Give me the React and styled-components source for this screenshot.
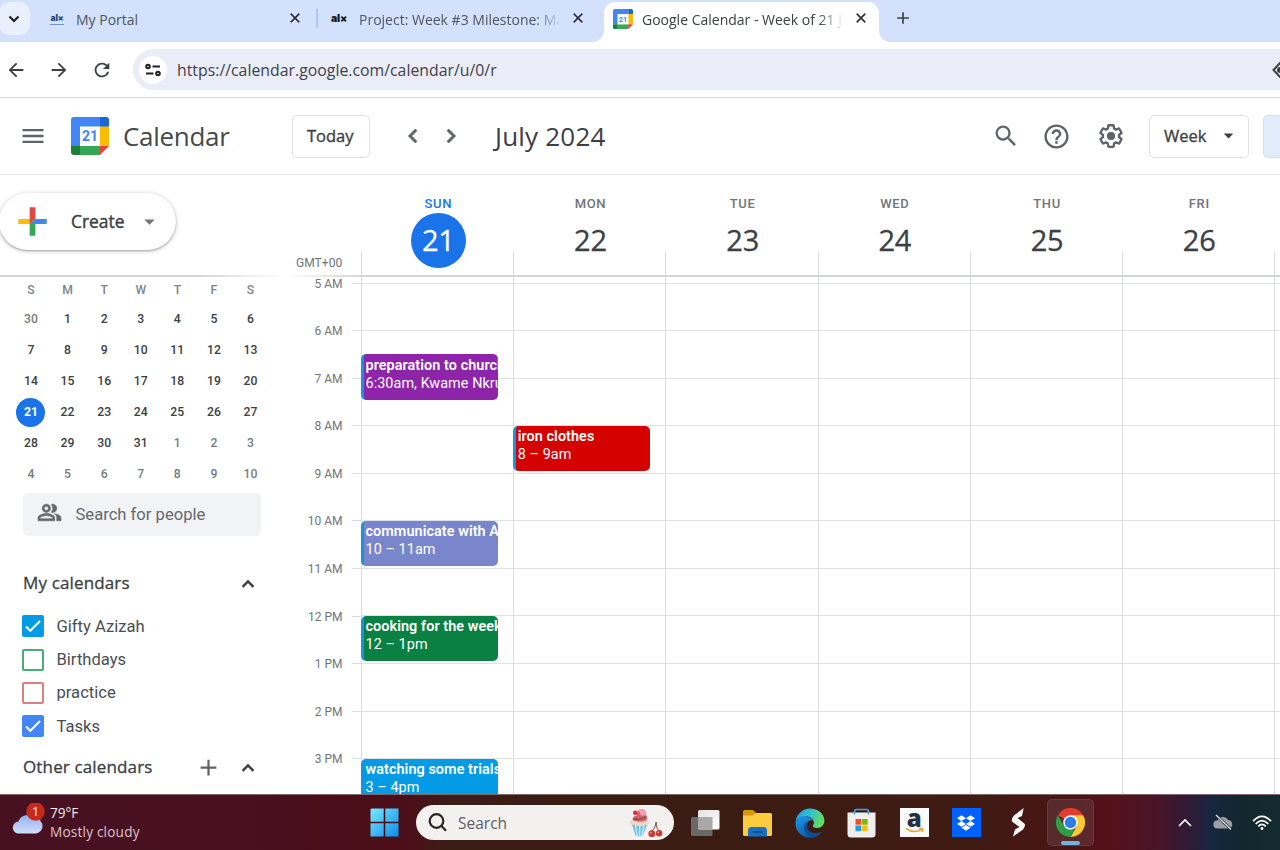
import React from "react";
import styled, { createGlobalStyle, css } from "styled-components";
import {
  MdSearch,
  MdMenu,
  MdChevronLeft,
  MdChevronRight,
  MdHelpOutline,
  MdArrowDropDown,
  MdOutlinePeopleAlt,
  MdExpandLess,
  MdAdd,
  MdRefresh,
  MdArrowBack,
  MdArrowForward,
  MdClose,
} from "react-icons/md";
import { FaDropbox } from "react-icons/fa";

const GlobalStyle = createGlobalStyle`
  * {
    box-sizing: border-box;
  }
  body {
    margin: 0;
    overflow: hidden;
    background: #fff;
    font-family: Roboto, "Liberation Sans", sans-serif;
    color: #3c4043;
  }
  svg {
    display: block;
    flex-shrink: 0;
  }
`;

const systemFont = css`
  font-family: "Open Sans", "Noto Sans", sans-serif;
`;

/* heavier strokes, without outlining the icon's empty bounding path */
const boldIcon = css`
  path:not([fill="none"]) {
    stroke: currentColor;
    stroke-width: 0.6px;
  }
`;

const Screen = styled.div`
  width: 1280px;
  height: 850px;
  overflow: hidden;
  display: flex;
  flex-direction: column;
`;

/* browser */
const TabStrip = styled.div`
  height: 42px;
  flex-shrink: 0;
  display: flex;
  background: #d3e1fc;
`;
const TabSearch = styled.div`
  width: 31px;
  height: 33px;
  margin: 2px 0 0 -1px;
  padding-left: 6px;
  display: flex;
  align-items: center;
  border-radius: 11px;
  background: #e9f0fd;
  color: #1f2023;
`;
const Tab = styled.div`
  position: relative;
  width: ${(props) => props.$width}px;
  height: 40px;
  margin-top: 2px;
  padding: 0 ${(props) => props.$end}px 7px ${(props) => props.$pad}px;
  display: flex;
  align-items: center;
  color: ${(props) => (props.$active ? "#3c4043" : "#50545c")};
  ${(props) =>
    props.$active &&
    css`
      background: #fff;
      border-radius: 11px 11px 0 0;
      &::before,
      &::after {
        content: "";
        position: absolute;
        bottom: 0;
        width: 11px;
        height: 11px;
      }
      &::before {
        left: -11px;
        background: radial-gradient(circle at 0 0, transparent 10.5px, #fff 11px);
      }
      &::after {
        right: -11px;
        background: radial-gradient(circle at 100% 0, transparent 10.5px, #fff 11px);
      }
    `}
`;
const AlxMark = styled.span`
  width: ${(props) => (props.$underline ? 14 : 18)}px;
  font: 900 ${(props) => (props.$underline ? 8.5 : 10.5)}px/9px Inter, sans-serif;
  letter-spacing: -0.2px;
  text-align: center;
  white-space: nowrap;
  color: ${(props) => props.$color};
  border-bottom: ${(props) => (props.$underline ? "1px solid #6c95cb" : "0")};
  padding-bottom: 1px;
  margin: 1px ${(props) => props.$gap}px 0 0;
`;
const TabTitle = styled.span`
  ${systemFont}
  flex: 1;
  overflow: hidden;
  white-space: nowrap;
  font-size: 14px;
  line-height: 22px;
  margin: 3px 0 0 ${(props) => props.$gap || 0}px;
  ${(props) =>
    props.$fade &&
    css`
      mask-image: linear-gradient(to right, #000 calc(100% - 24px), transparent calc(100% + 2px));
    `}
`;
const TabClose = styled.span`
  display: flex;
  margin: -1px 0 0 ${(props) => props.$gap || 0}px;
  color: #2b2c30;
  ${boldIcon}
`;
const TabDivider = styled.span`
  width: 2px;
  height: 19px;
  margin: 9px 0 0 -1px;
  background: #a8c7fa;
`;
const NewTab = styled.span`
  display: flex;
  padding: 8px 0 0 14px;
  color: #3c4043;
`;
const AddressRow = styled.div`
  height: 56px;
  flex-shrink: 0;
  display: flex;
  align-items: center;
  border-bottom: 1px solid #d8dadd;
  background: #fff;
`;
const NavButtons = styled.div`
  width: 133px;
  padding-left: 5px;
  display: flex;
  gap: 21px;
  color: #3c4043;
`;
const Omnibox = styled.div`
  ${systemFont}
  flex: 1;
  height: 41px;
  padding: 0 0 0 6px;
  display: flex;
  align-items: center;
  overflow: hidden;
  border-radius: 21px 0 0 21px;
  background: #eaedf7;
  font-size: 15.8px;
  color: #3f4146;
`;
const SiteInfo = styled.span`
  width: 28px;
  height: 28px;
  margin-right: 10px;
  display: flex;
  align-items: center;
  justify-content: center;
  border-radius: 50%;
  background: #fff;
`;
const Url = styled.span`
  flex: 1;
  letter-spacing: 0.02px;
`;
const ExtensionMark = styled.span`
  width: 8px;
  overflow: hidden;
`;

/* calendar header */
const Header = styled.header`
  height: 77px;
  flex-shrink: 0;
  display: flex;
  align-items: center;
  padding-left: 19px;
  border-bottom: 1px solid #e4e6e8;
  color: #5f6368;
`;
const Brand = styled.h1`
  width: 169px;
  margin: 0 0 0 14px;
  font: 400 26px/32px "Open Sans", sans-serif;
  letter-spacing: -0.3px;
  color: #45494d;
`;
const OutlineButton = styled.div`
  ${systemFont}
  width: ${(props) => props.$width}px;
  height: 43px;
  padding: 0 8px 2px 14px;
  display: flex;
  align-items: center;
  justify-content: space-between;
  border: 1px solid #dfe1e5;
  border-radius: 5px;
  font-size: 16.5px;
  -webkit-text-stroke: 0.35px;
  color: #3c4043;
`;
const Arrows = styled.div`
  display: flex;
  gap: 10px;
  margin: 0 30px 0 29px;
  ${boldIcon}
`;
const MonthTitle = styled.h2`
  flex: 1;
  margin: 0;
  font: 400 26px/32px "Open Sans", sans-serif;
  letter-spacing: 0.2px;
  color: #3c4043;
`;
const HeaderIcons = styled.div`
  display: flex;
  align-items: center;
  margin-right: 24px;
`;
const HelpSlot = styled.span`
  margin: 0 26px 0 22px;
`;
const GridButton = styled.div`
  width: 17px;
  height: 43px;
  margin-left: 14px;
  border: 1px solid #d3dfec;
  border-right: 0;
  border-radius: 5px 0 0 5px;
  background: #e1edfb;
`;

/* sidebar */
const Main = styled.div`
  height: 619px;
  flex-shrink: 0;
  display: flex;
  overflow: hidden;
`;
const Sidebar = styled.aside`
  width: 285px;
  flex-shrink: 0;
`;
const CreateArea = styled.div`
  height: 101px;
  padding-top: 18px;
`;
const CreateButton = styled.div`
  width: 177px;
  height: 57px;
  margin-left: -1px;
  padding-left: 13px;
  display: flex;
  align-items: center;
  border-radius: 29px;
  box-shadow: 0 1px 2px rgba(60, 64, 67, 0.38), 0 1px 4px 1px rgba(60, 64, 67, 0.16);
  font: 400 17.4px "Open Sans", sans-serif;
  -webkit-text-stroke: 0.4px;
  color: #3c4043;
`;
const CreateText = styled.span`
  width: 66px;
  margin: -1px 0 0 18px;
`;
const SidebarRule = styled.div`
  height: 2px;
  margin-top: -1px;
  background: linear-gradient(to right, #d3d5d7 70%, transparent);
`;
const MiniCalendar = styled.div`
  padding-left: 12.7px;
  display: grid;
  grid-template-columns: repeat(7, 36.6px);
  grid-template-rows: 27.3px repeat(6, 30.9px);
  place-items: center;
  font-size: 12.2px;
  font-weight: 500;
`;
const WeekLetter = styled.span`
  padding-bottom: 2px;
  color: #80848a;
`;
const MiniDay = styled.span`
  width: 29px;
  height: 29px;
  border-radius: 50%;
  line-height: 29px;
  text-align: center;
  letter-spacing: 0.1px;
  color: ${(props) => (props.$muted ? "#777b80" : "#3c4043")};
  ${(props) =>
    props.$today &&
    css`
      background: #1a73e8;
      color: #fff;
      font-weight: 700;
    `}
`;
const PeopleSearch = styled.div`
  width: 238px;
  height: 43px;
  margin: 3px 0 28px 23px;
  padding: 0 0 0 14px;
  display: flex;
  align-items: center;
  gap: 13.5px;
  border-radius: 5px;
  background: #f1f3f4;
  font-size: 16.6px;
  color: #64686d;
`;
const PeopleIcon = styled(MdOutlinePeopleAlt)`
  margin-top: -4px;
  ${boldIcon}
`;
const SectionTitle = styled.div`
  height: 40px;
  margin: ${(props) => props.$top || 0}px 0 6px;
  padding: 0 25px 0 23px;
  display: flex;
  align-items: center;
  font: 400 17px "Open Sans", sans-serif;
  color: #3c4043;
`;
const SectionName = styled.span`
  flex: 1;
  margin-top: -2px;
  letter-spacing: 0.14px;
  -webkit-text-stroke: 0.3px;
`;
const SectionIcons = styled.span`
  display: flex;
  align-items: center;
  gap: 14px;
`;
const Collapse = styled(MdExpandLess)`
  ${boldIcon}
`;
const CalendarRow = styled.div`
  height: 33.3px;
  padding-left: 22px;
  display: flex;
  align-items: center;
  gap: 12.5px;
  font-size: 16.6px;
  color: #4a4e52;
`;
const Checkbox = styled.span`
  width: 22px;
  height: 22px;
  border: 2px solid ${(props) => props.$color};
  border-radius: 2px;
  background: ${(props) => (props.$checked ? props.$color : "#fff")};
  display: flex;
  align-items: center;
  justify-content: center;
`;

/* week view */
const Week = styled.section`
  width: 995px;
  overflow: hidden;
`;
const WeekHead = styled.div`
  height: 102px;
  display: flex;
  background: linear-gradient(to right, transparent, #d2d4d7 80px) bottom / 100% 2px no-repeat;
`;
const Zone = styled.div`
  width: 76px;
  flex-shrink: 0;
  padding: 80px 0 0 11px;
  font-size: 12.1px;
  line-height: 16px;
  color: #70757a;
`;
const DayHead = styled.div`
  width: 152.2px;
  flex-shrink: 0;
  margin-bottom: 2px;
  padding: 20px 0 0 2.4px;
  display: flex;
  flex-direction: column;
  align-items: center;
  background: linear-gradient(#dadce0, #dadce0) left bottom / 1px 24px no-repeat;
  color: ${(props) => (props.$today ? "#1a73e8" : "#70757a")};
`;
const DayName = styled.span`
  font-size: 13px;
  line-height: 18px;
  font-weight: 500;
  letter-spacing: 0.7px;
`;
const DayNumber = styled.span`
  width: 55px;
  height: 55px;
  border-radius: 50%;
  font: 400 29px/54px "Open Sans", sans-serif;
  text-align: center;
  letter-spacing: -0.2px;
  -webkit-text-stroke: 0.3px;
  color: ${(props) => (props.$today ? "#fff" : "#3c4043")};
  background: ${(props) => (props.$today ? "#1a73e8" : "transparent")};
`;
const Grid = styled.div`
  display: flex;
`;
const Gutter = styled.div`
  width: 76px;
  flex-shrink: 0;
  margin-top: -0.45px;
`;
const HourLabel = styled.div`
  height: 47.57px;
  display: flex;
  justify-content: flex-end;
  gap: 9.5px;
  font-size: 12px;
  line-height: 14px;
  color: #70757a;
  &::after {
    content: "";
    width: 9px;
    height: 1px;
    margin-top: 6px;
    background: #dadce0;
  }
`;
const DayColumn = styled.div`
  position: relative;
  width: 152.2px;
  flex-shrink: 0;
  padding-top: 5.55px;
  border-left: 1px solid #dadce0;
`;
const HourCell = styled.div`
  height: 47.57px;
  border-top: 1px solid #dfe1e4;
`;
const EventCard = styled.div`
  position: absolute;
  top: ${(props) => 6 + (props.$start - 5) * 47.57}px;
  left: -1px;
  width: 137px;
  height: 45.5px;
  padding: 2.5px 0 0 1.5px;
  overflow: hidden;
  border-left: 3px solid #1795dc;
  border-radius: 5px;
  background: ${(props) => props.$color};
  color: #fff;
  font-size: 14.4px;
  line-height: 18px;
  letter-spacing: 0.07px;
  white-space: nowrap;
`;
const EventTitle = styled.div`
  font-weight: 600;
`;

/* taskbar */
const Taskbar = styled.footer`
  position: relative;
  height: 56px;
  flex-shrink: 0;
  display: flex;
  align-items: center;
  border-top: 1px solid #80686a;
  background: linear-gradient(
    to right,
    #481122 0,
    #481020 250px,
    #4b0d18 350px,
    #4c0f19 410px,
    #3a1d14 450px,
    #3a1c12 700px,
    #401b14 970px,
    #4a1416 1080px,
    #551119 1110px,
    #48152a 1160px,
    #2a1c38 1195px,
    #152740 1212px,
    #12272d 1240px,
    #142c30 1280px
  );
  ${systemFont}
`;
const Weather = styled.div`
  width: 358px;
  padding-left: 10px;
  display: flex;
  align-items: flex-start;
  gap: 4px;
  font-size: 13.6px;
  line-height: 19px;
  color: #f3e9ec;
`;
const WeatherDetail = styled.div`
  letter-spacing: 0.2px;
  color: #dcc5cb;
`;
const StartSlot = styled.div`
  width: 58px;
  padding-left: 12px;
`;
const TaskSearch = styled.div`
  width: 258px;
  height: 35px;
  padding: 0 11px 0 11px;
  display: flex;
  align-items: center;
  gap: 10px;
  border-radius: 18px;
  background: #f3f1f0;
  font-size: 15.5px;
  color: #605e5e;
`;
const TaskSearchText = styled.span`
  flex: 1;
`;
const Apps = styled.div`
  width: 418px;
  margin-left: 5px;
  display: flex;
`;
const AppSlot = styled.div`
  width: 52.25px;
  height: 47px;
  flex-shrink: 0;
  display: flex;
  align-items: center;
  justify-content: center;
`;
const AppTile = styled.div`
  position: relative;
  width: 29px;
  height: 29px;
  display: flex;
  align-items: center;
  justify-content: center;
  background: ${(props) => props.$color};
  color: #fff;
`;
const AmazonLetter = styled.span`
  font: 800 24px/16px "Open Sans", sans-serif;
  color: #25303e;
  margin-top: -9px;
`;
const AmazonSmile = styled.svg`
  position: absolute;
  left: 5px;
  bottom: 3px;
`;
const ActiveApp = styled.div`
  position: relative;
  width: 47px;
  height: 47px;
  display: flex;
  align-items: center;
  justify-content: center;
  border: 1px solid rgba(255, 255, 255, 0.09);
  border-radius: 5px;
  background: rgba(255, 255, 255, 0.09);
  &::after {
    content: "";
    position: absolute;
    left: 13px;
    bottom: 0;
    width: 19px;
    height: 4px;
    border-radius: 2px;
    background: #6cb4e4;
  }
`;
const Tray = styled.div`
  padding-left: 80px;
  display: flex;
  align-items: center;
  gap: 19.5px;
`;

const hours = [
  "5 AM", "6 AM", "7 AM", "8 AM", "9 AM", "10 AM",
  "11 AM", "12 PM", "1 PM", "2 PM", "3 PM",
];

const days = [
  {
    name: "SUN",
    number: 21,
    today: true,
    events: [
      { title: "preparation to church", time: "6:30am, Kwame Nkrumah", start: 6.5, color: "#8e24aa" },
      { title: "communicate with ALX", time: "10 – 11am", start: 10, color: "#7986cb" },
      { title: "cooking for the week", time: "12 – 1pm", start: 12, color: "#0b8043" },
      { title: "watching some trials", time: "3 – 4pm", start: 15, color: "#039be5" },
    ],
  },
  {
    name: "MON",
    number: 22,
    events: [{ title: "iron clothes", time: "8 – 9am", start: 8, color: "#d50000" }],
  },
  { name: "TUE", number: 23, events: [] },
  { name: "WED", number: 24, events: [] },
  { name: "THU", number: 25, events: [] },
  { name: "FRI", number: 26, events: [] },
  { name: "", number: "", events: [] },
];

const miniDays = [
  30, ...Array.from({ length: 31 }, (_, i) => i + 1),
  ...Array.from({ length: 10 }, (_, i) => i + 1),
];

const calendars = [
  { name: "Gifty Azizah", color: "#039be5", checked: true },
  { name: "Birthdays", color: "#4aaa78" },
  { name: "practice", color: "#db817b" },
  { name: "Tasks", color: "#4285f4", checked: true },
];

function CalendarLogo({ size }) {
  return (
    <svg width={size} height={size} viewBox="0 0 38 38">
      <path d="M3 0h26v10H9v19H0V3a3 3 0 0 1 3-3z" fill="#4285f4" />
      <path d="M29 0h6a3 3 0 0 1 3 3v7h-9z" fill="#1967d2" />
      <path d="M29 9.500h9V29h-9z" fill="#fbbc04" />
      <path d="M9 29h20v9H9z" fill="#34a853" />
      <path d="M0 29h9v9H3a3 3 0 0 1-3-3z" fill="#188038" />
      <path d="M29 29h9l-9 9z" fill="#ea4335" />
      <path d="M9 9.500h20V29H9z" fill="#fff" />
      <text
        x="19"
        y="24.300"
        textAnchor="middle"
        fontFamily="Roboto, sans-serif"
        fontWeight="700"
        fontSize="14"
        fill="#4285f4"
      >
        21
      </text>
    </svg>
  );
}

function Gear() {
  return (
    <svg width="28" height="28" viewBox="0 0 24 24" fill="currentColor">
      <path d="M13.85 22.25h-3.7c-.74 0-1.36-.54-1.45-1.27l-.27-1.89c-.27-.14-.53-.29-.79-.46l-1.8.72c-.7.26-1.47-.03-1.81-.65L2.2 15.53c-.35-.66-.2-1.44.36-1.88l1.53-1.19c-.01-.15-.02-.3-.02-.46 0-.15.01-.31.02-.46l-1.52-1.19c-.59-.45-.74-1.26-.37-1.88l1.85-3.19c.34-.62 1.11-.9 1.79-.63l1.81.73c.26-.17.52-.32.78-.46l.27-1.91c.09-.7.71-1.25 1.44-1.25h3.7c.74 0 1.36.54 1.45 1.27l.27 1.89c.27.14.53.29.79.46l1.8-.72c.71-.26 1.48.03 1.82.65l1.84 3.18c.36.66.2 1.44-.36 1.88l-1.52 1.19c.01.15.02.3.02.46s-.01.31-.02.46l1.52 1.19c.56.45.72 1.23.37 1.86l-1.86 3.22c-.34.62-1.11.9-1.8.63l-1.8-.72c-.26.17-.52.32-.78.46l-.27 1.91c-.1.68-.72 1.22-1.46 1.22zm-3.23-2h2.76l.37-2.55.53-.22c.44-.18.88-.44 1.34-.78l.45-.34 2.38.96 1.38-2.4-2.03-1.58.07-.56c.03-.26.06-.51.06-.78s-.03-.53-.06-.78l-.07-.56 2.03-1.58-1.39-2.4-2.39.96-.45-.35c-.42-.32-.87-.58-1.33-.77l-.52-.22-.37-2.55h-2.76l-.37 2.55-.53.21c-.44.19-.88.44-1.34.79l-.45.33-2.38-.95-1.39 2.39 2.03 1.58-.07.56a7 7 0 0 0-.06.79c0 .26.02.53.06.78l.07.56-2.03 1.58 1.38 2.4 2.39-.96.45.35c.43.33.86.58 1.33.77l.53.22.38 2.55z" />
      <circle cx="12" cy="12" r="3.5" />
    </svg>
  );
}

function BrowserBar() {
  return (
    <>
      <TabStrip>
        <TabSearch>
          <svg width="18" height="18" viewBox="0 0 18 18" fill="none" stroke="currentColor" strokeWidth="2.2">
            <path d="M4.500 6.500 9 11l4.500-4.500" />
          </svg>
        </TabSearch>
        <Tab $width={287} $pad={20} $end={14.5}>
          <AlxMark $color="#27477f" $underline $gap={12}>al×</AlxMark>
          <TabTitle>My Portal</TabTitle>
          <TabClose><MdClose size={16} /></TabClose>
        </Tab>
        <TabDivider />
        <Tab $width={286} $pad={12} $end={18}>
          <AlxMark $color="#15171b" $gap={11}>al×</AlxMark>
          <TabTitle $fade>Project: Week #3 Milestone: Mastering</TabTitle>
          <TabClose $gap={11}><MdClose size={16} /></TabClose>
        </Tab>
        <Tab $width={275} $pad={9} $end={10} $active>
          <CalendarLogo size={20} />
          <TabTitle $fade $gap={9}>Google Calendar - Week of 21 July</TabTitle>
          <TabClose $gap={11}><MdClose size={16} /></TabClose>
        </Tab>
        <NewTab><MdAdd size={20} /></NewTab>
      </TabStrip>
      <AddressRow>
        <NavButtons>
          <MdArrowBack size={22} />
          <MdArrowForward size={22} />
          <MdRefresh size={22} />
        </NavButtons>
        <Omnibox>
          <SiteInfo>
            <svg width="16" height="14" viewBox="0 0 16 14" fill="none" stroke="#202124" strokeWidth="2">
              <circle cx="3" cy="3.500" r="1.800" />
              <path d="M7.500 3.500H15M1 10.500h7.500" />
              <circle cx="13" cy="10.500" r="1.800" />
            </svg>
          </SiteInfo>
          <Url>https://calendar.google.com/calendar/u/0/r</Url>
          <ExtensionMark>
            <svg width="16" height="16" viewBox="0 0 16 16" fill="none" stroke="#3c4043" strokeWidth="2">
              <path d="M8 1 1.500 8 8 15l6.500-7z" />
              <circle cx="8" cy="8" r="2" fill="#3c4043" />
            </svg>
          </ExtensionMark>
        </Omnibox>
      </AddressRow>
    </>
  );
}

function CalendarHeader() {
  return (
    <Header>
      <MdMenu size={28} style={{ marginRight: 24 }} />
      <CalendarLogo size={38} />
      <Brand>Calendar</Brand>
      <OutlineButton $width={78}>Today</OutlineButton>
      <Arrows>
        <MdChevronLeft size={28} />
        <MdChevronRight size={28} />
      </Arrows>
      <MonthTitle>July 2024</MonthTitle>
      <HeaderIcons>
        <MdSearch size={28} />
        <HelpSlot>
          <MdHelpOutline size={29} />
        </HelpSlot>
        <Gear />
      </HeaderIcons>
      <OutlineButton $width={100}>
        Week
        <MdArrowDropDown size={23} />
      </OutlineButton>
      <GridButton />
    </Header>
  );
}

function SideMenu() {
  return (
    <Sidebar>
      <CreateArea>
        <CreateButton>
          <svg width="41" height="41" viewBox="0 0 36 36">
            <path fill="#34a853" d="M15.500 16v14.500h5V20z" />
            <path fill="#4285f4" d="M30.500 15.700H20.500l-5 4.600h15z" />
            <path fill="#fbbc05" d="M5.500 15.700v4.600h10l5-4.600z" />
            <path fill="#e04a3c" d="M20.500 15.700V5.500h-5v14.800z" />
          </svg>
          <CreateText>Create</CreateText>
          <MdArrowDropDown size={25} color="#70757a" />
        </CreateButton>
      </CreateArea>
      <SidebarRule />
      <MiniCalendar>
        {["S", "M", "T", "W", "T", "F", "S"].map((letter, i) => (
          <WeekLetter key={i}>{letter}</WeekLetter>
        ))}
        {miniDays.map((day, i) => (
          <MiniDay key={i} $muted={i === 0 || i > 31} $today={i === 21}>
            {day}
          </MiniDay>
        ))}
      </MiniCalendar>
      <PeopleSearch>
        <PeopleIcon size={25} />
        Search for people
      </PeopleSearch>
      <SectionTitle>
        <SectionName>My calendars</SectionName>
        <Collapse size={24} />
      </SectionTitle>
      {calendars.map((item) => (
        <CalendarRow key={item.name}>
          <Checkbox $color={item.color} $checked={item.checked}>
            {item.checked && (
              <svg width="18" height="18" viewBox="0 0 18 18" fill="none" stroke="#fff" strokeWidth="2">
                <path d="m2 9.500 4.300 4.300L16 4" />
              </svg>
            )}
          </Checkbox>
          {item.name}
        </CalendarRow>
      ))}
      <SectionTitle $top={5}>
        <SectionName>Other calendars</SectionName>
        <SectionIcons>
          <MdAdd size={27} color="#5f6368" />
          <Collapse size={24} />
        </SectionIcons>
      </SectionTitle>
    </Sidebar>
  );
}

function WeekView() {
  return (
    <Week>
      <WeekHead>
        <Zone>GMT+00</Zone>
        {days.map((day) => (
          <DayHead key={day.name} $today={day.today}>
            <DayName>{day.name}</DayName>
            <DayNumber $today={day.today}>{day.number}</DayNumber>
          </DayHead>
        ))}
      </WeekHead>
      <Grid>
        <Gutter>
          {hours.map((hour) => (
            <HourLabel key={hour}>{hour}</HourLabel>
          ))}
        </Gutter>
        {days.map((day) => (
          <DayColumn key={day.name}>
            {hours.map((hour) => (
              <HourCell key={hour} />
            ))}
            {day.events.map((event) => (
              <EventCard key={event.title} $start={event.start} $color={event.color}>
                <EventTitle>{event.title}</EventTitle>
                {event.time}
              </EventCard>
            ))}
          </DayColumn>
        ))}
      </Grid>
    </Week>
  );
}

function WeatherIcon() {
  return (
    <svg width="36" height="40" viewBox="0 5 36 40">
      <defs>
        <linearGradient id="cloud" x1="0" y1="0" x2="0" y2="1">
          <stop offset="0" stopColor="#8fb0ee" />
          <stop offset="1" stopColor="#d3e0fa" />
        </linearGradient>
      </defs>
      <circle cx="25" cy="21" r="5.500" fill="#f0922b" />
      <path d="M9 35.500a6 6 0 0 1-.5-12 9 9 0 0 1 16-2.500A7 7 0 0 1 26 35.500z" fill="url(#cloud)" />
      <circle cx="25.500" cy="13.500" r="9.300" fill="#c42b1c" />
      <text x="25.500" y="18" textAnchor="middle" fontFamily="Open Sans, sans-serif" fontSize="12.500" fill="#fff">
        1
      </text>
    </svg>
  );
}

function Cupcake() {
  return (
    <svg width="35" height="32" viewBox="0 0 36 32">
      <path d="m4 17 3.500 11.500q4 2.500 8 0L20 17z" fill="#72bfe6" />
      <path d="m7.500 18 2 11.500M12 18v12M16.500 18l-2 11.500" stroke="#c5e8f8" strokeWidth="1.500" />
      <path d="M1 15.500q2-3 4-2 7-3 13 0 3-1 4 2-2 4-5 2-3 3-5 1-3 2-5-1-4 1-6-2z" fill="#f3d8bf" />
      <path d="M5 13.500c-1-4 2-5 4-5 0-5 3-7 6-7 3 1 4 4 3 6 3 2 2 5.500 0 6.500-5 1.500-9 .5-13-.5z" fill="#c9646a" />
      <path d="M11 3q6-4 8 3-1 4-6 2z" fill="#f49db0" />
      <path d="M6 11.500q6 2.500 12-2" stroke="#8d3d45" strokeWidth="1.200" fill="none" />
      <circle cx="7.500" cy="5.500" r="2.400" fill="#cf3340" />
      <path d="M24 25q4-3 5-10 0 7 3 9" stroke="#7a4a35" strokeWidth="1" fill="none" />
      <circle cx="24.500" cy="27" r="3.500" fill="#c93a35" />
      <circle cx="32" cy="26.500" r="3.300" fill="#c93a35" />
      <circle cx="23.500" cy="26" r="1" fill="#f08c86" />
      <circle cx="31" cy="25.500" r="1" fill="#f08c86" />
    </svg>
  );
}

function TaskBar() {
  return (
    <Taskbar>
      <Weather>
        <WeatherIcon />
        <div>
          <div>79°F</div>
          <WeatherDetail>Mostly cloudy</WeatherDetail>
        </div>
      </Weather>
      <StartSlot>
        <svg width="29" height="29" viewBox="0 0 29 29">
          <defs>
            <linearGradient id="win" x1="0" y1="0" x2="1" y2="1">
              <stop offset="0" stopColor="#7be8fb" />
              <stop offset="1" stopColor="#0a8cf0" />
            </linearGradient>
          </defs>
          <path d="M1.500.5h12.200v13.200H.5V1.500zM15.300.5h13.200v13.200H15.300zM.5 15.300h13.200v13.200H.5zM15.300 15.300h13.200v13.200H15.300z" fill="url(#win)" />
        </svg>
      </StartSlot>
      <TaskSearch>
        <svg width="21" height="21" viewBox="0 0 21 21" fill="none" stroke="#262626" strokeWidth="2.200">
          <circle cx="9.500" cy="9" r="6.800" />
          <path d="m14.500 14 4.500 4.700" />
        </svg>
        <TaskSearchText>Search</TaskSearchText>
        <Cupcake />
      </TaskSearch>
      <Apps>
        <AppSlot>
          <svg width="30" height="28" viewBox="0 0 30 28">
            <defs>
              <linearGradient id="pane" x1="0" y1="0" x2="1" y2="1">
                <stop offset="0" stopColor="#e2e2e2" />
                <stop offset="1" stopColor="#fff" />
              </linearGradient>
            </defs>
            <rect x="1" y="8" width="21.500" height="19" rx="1.500" fill="#6a6765" />
            <rect x="8" y="1" width="21.500" height="19.500" rx="1.500" fill="url(#pane)" />
            <path d="M8 8h14.500v12.500H9.500A1.500 1.500 0 0 1 8 19z" fill="#aaa8a6" />
          </svg>
        </AppSlot>
        <AppSlot>
          <svg width="29" height="28" viewBox="0 0 29 28">
            <path d="M0 8V2.500Q0 1 1.500 1H10l3 3v5z" fill="#d99613" />
            <path d="M0 6.500h9.500L12.500 4h15Q29 4 29 5.500v20q0 1.500-1.500 1.500h-26Q0 27 0 25.500z" fill="#fccb3e" />
            <path d="M5 27.500V21.500q0-3.500 3.500-3.500h12q3.500 0 3.500 3.500v6z" fill="#1672c0" />
            <path d="M9.500 23h10" stroke="#0c4a88" strokeWidth="1.500" />
          </svg>
        </AppSlot>
        <AppSlot>
          <svg width="30" height="30" viewBox="0 0 30 30">
            <defs>
              <linearGradient id="edgeTop" x1="0" y1="0.300" x2="1" y2="0.600">
                <stop offset="0" stopColor="#1f9fe0" />
                <stop offset="0.500" stopColor="#35c4c6" />
                <stop offset="1" stopColor="#6be04f" />
              </linearGradient>
              <linearGradient id="edgeLow" x1="0" y1="0" x2="0.600" y2="1">
                <stop offset="0" stopColor="#1e9ae8" />
                <stop offset="1" stopColor="#0c56a8" />
              </linearGradient>
            </defs>
            <path d="M.6 14A14.500 14.500 0 0 1 15 .5c8 0 14.400 5.500 14.400 12 0 4.500-3.200 7.500-7 7.500-3.400 0-5-1.400-4.500-2.600 1.800-2 1-5.400-1.400-7.200C11.800 6.500 3.500 8 .6 14z" fill="url(#edgeTop)" />
            <path d="M.5 15C1.500 9.500 6 7.500 10.500 8c3.500.4 6.500 2.300 7.500 5-3-1.500-6.300.5-6.300 4.500 0 5 4.800 8.500 9.300 8.500 2.300 0 4.500-1 6-2.300-2.500 3.700-7 6-12 6C7 29.700.2 23.500.5 15z" fill="url(#edgeLow)" />
            <path d="M12 13.500c-2 1.800-4 5-2.500 9 1.400 3.800 4.300 6.500 8 7 3.800-.6 7.300-2.800 9.300-5.800-8 4-17-.5-14.800-10.200z" fill="#0e4c93" />
          </svg>
        </AppSlot>
        <AppSlot>
          <svg width="29" height="30" viewBox="0 0 29 30">
            <path d="M7.500 7V3.500Q7.500 1.500 9.500 1.500h10q2 0 2 2V7" fill="none" stroke="#3aa7e6" strokeWidth="1.600" />
            <path d="M.5 4.500h28V26q0 3.500-3.500 3.500H4Q.5 29.500.5 26z" fill="#efeeed" />
            <path d="M7.500 6.500v-3M21.500 6.500v-3" fill="none" stroke="#3aa7e6" strokeWidth="1.600" />
            <path d="M8.500 11h5.700v5.700H8.500z" fill="#f25022" />
            <path d="M15 11h5.700v5.700H15z" fill="#7fba00" />
            <path d="M8.500 17.500h5.700v5.700H8.500z" fill="#1c9de0" />
            <path d="M15 17.500h5.700v5.700H15z" fill="#fdb913" />
          </svg>
        </AppSlot>
        <AppSlot>
          <AppTile $color="#fbfafa">
            <AmazonLetter>a</AmazonLetter>
            <AmazonSmile width="19" height="7" viewBox="0 0 19 7" fill="none" stroke="#f0a53a" strokeWidth="1.600">
              <path d="M1 1.500q8 5.500 15.500 1M14 1.500h3.500L17 5" />
            </AmazonSmile>
          </AppTile>
        </AppSlot>
        <AppSlot>
          <AppTile $color="#0061fe"><FaDropbox size={18} /></AppTile>
        </AppSlot>
        <AppSlot>
          <svg width="15" height="29" viewBox="0 0 15 29" fill="#fff">
            <path d="M12.700 0 3 7.500Q.5 10 1 13.500L8.500 19 4 21.500 2 28.500l10-7q2.500-2.500 1.800-5.500L6.500 10l4.500-2z" />
          </svg>
        </AppSlot>
        <AppSlot>
          <ActiveApp>
            <svg width="29" height="29" viewBox="0 0 48 48">
              <path d="M24 24 3.200 12A24 24 0 0 1 44.800 12z" fill="#e33b2e" />
              <path d="M24 12h20.800A24 24 0 0 1 24 48l10.400-18z" fill="#fcc934" />
              <path d="M3.200 12 13.600 30 24 36h7L24 48A24 24 0 0 1 3.200 12z" fill="#2d9d48" />
              <circle cx="24" cy="24" r="12" fill="#fff" />
              <circle cx="24" cy="24" r="9.500" fill="#2b7de9" />
            </svg>
          </ActiveApp>
        </AppSlot>
      </Apps>
      <Tray>
        <svg width="16" height="16" viewBox="0 0 16 16" fill="none" stroke="#fff" strokeWidth="1.700">
          <path d="M2 11l6-6 6 6" />
        </svg>
        <svg width="20" height="17" viewBox="0 0 20 17">
          <path d="M4.500 14.500A4 4 0 0 1 4.300 6.500 6 6 0 0 1 15 6a4.300 4.300 0 0 1 .8 8.500z" fill="#9aa0a3" />
          <path d="M3 1l15 14.500" stroke="#1c2a38" strokeWidth="2.500" />
          <path d="M3 1l15 14.500" stroke="#e5e7e8" strokeWidth="1.200" />
        </svg>
        <svg width="20" height="16" viewBox="0 0 20 16" fill="none" stroke="#fff" strokeWidth="1.700">
          <path d="M1 6.200Q10-3.500 19 6.200M3.700 8.800q6.300-6.500 12.600 0M6.300 11.300q3.700-3.800 7.400 0" />
          <circle cx="10" cy="13.500" r="1.400" fill="#fff" stroke="none" />
        </svg>
      </Tray>
    </Taskbar>
  );
}

export default function App() {
  return (
    <Screen>
      <GlobalStyle />
      <BrowserBar />
      <CalendarHeader />
      <Main>
        <SideMenu />
        <WeekView />
      </Main>
      <TaskBar />
    </Screen>
  );
}
